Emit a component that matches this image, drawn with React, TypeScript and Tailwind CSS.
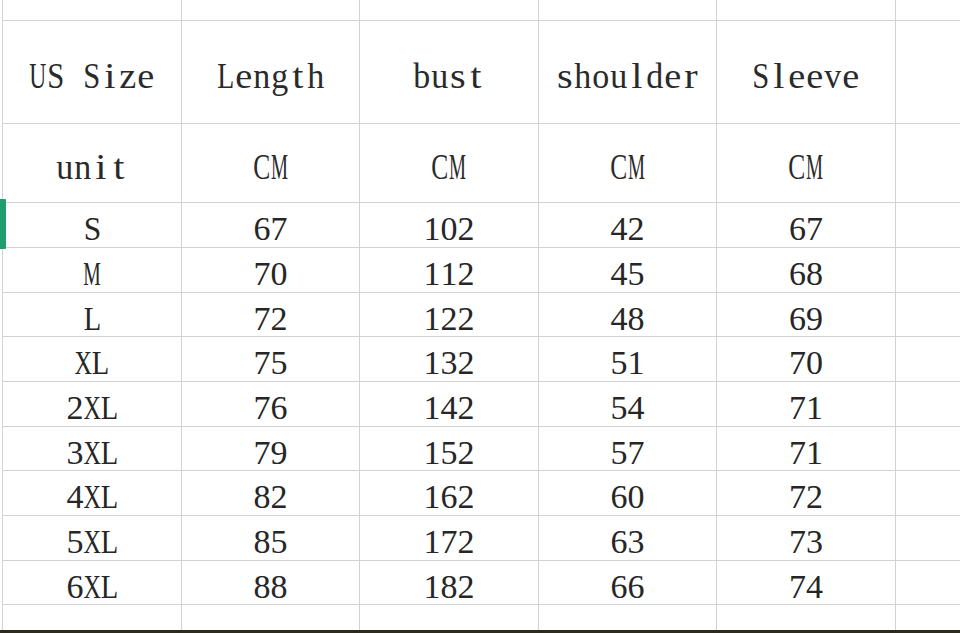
import React from 'react';

const cols = ['w-[179px]', 'w-[178px]', 'w-[179px]', 'w-[178px]', 'w-[179px]'];

const sizes = [
  { size: 'S', vals: ['67', '102', '42', '67'], h: 'h-[45px]' },
  { size: 'M', vals: ['70', '112', '45', '68'], h: 'h-[45px]' },
  { size: 'L', vals: ['72', '122', '48', '69'], h: 'h-[44px]' },
  { size: 'XL', vals: ['75', '132', '51', '70'], h: 'h-[45px]' },
  { size: '2XL', vals: ['76', '142', '54', '71'], h: 'h-[45px]' },
  { size: '3XL', vals: ['79', '152', '57', '71'], h: 'h-[44px]' },
  { size: '4XL', vals: ['82', '162', '60', '72'], h: 'h-[45px]' },
  { size: '5XL', vals: ['85', '172', '63', '73'], h: 'h-[45px]' },
  { size: '6XL', vals: ['88', '182', '66', '74'], h: 'h-[44px]' },
];

// advance widths of Liberation Serif (em), used to fit glyphs to a fixed pitch
const adv: Record<string, number> = {
  U: 0.722, S: 0.556, L: 0.611, C: 0.667, M: 0.889, X: 0.722,
  i: 0.278, z: 0.444, e: 0.444, n: 0.5, g: 0.5, t: 0.278, h: 0.5, b: 0.5,
  u: 0.5, s: 0.389, o: 0.5, l: 0.278, d: 0.5, r: 0.333, v: 0.5,
};

// serif glyphs on a fixed pitch, like the latin of a CJK system font
const Pitch = ({ text, px, pitch, maxW, grow, cls }: { text: string; px: number; pitch: string; maxW: number; grow: number; cls: string }) => (
  <span className={`inline-flex ${cls}`}>
    {text.split('').map((ch, i) => {
      const w = (adv[ch] ?? 0.5) * px;
      const s = Math.min(grow, maxW / w);
      return (
        <span key={i} className={`inline-flex justify-center ${pitch}`}>
          <span className="inline-block" style={{ transform: `scaleX(${s.toFixed(3)})` }}>
            {ch === ' ' ? '\u00a0' : ch}
          </span>
        </span>
      );
    })}
  </span>
);

type RowProps = { cells: string[]; h: string; kind: 'head' | 'data' | 'empty' };

const Row = ({ cells, h, kind }: RowProps) => (
  <div className={`flex ${h} border-b border-[#d2d2d2]`}>
    {cols.map((w, i) => (
      <div
        key={i}
        className={`${w} shrink-0 border-l border-[#d2d2d2] flex items-center justify-center ${kind === 'head' ? 'pt-[8px]' : 'pt-[8px]'}`}
      >
        {kind === 'head' && cells[i] && (
          <Pitch text={cells[i]} px={35} pitch="w-[18px]" maxW={17} grow={1.15} cls="font-['Liberation_Serif',serif] text-[35px] leading-none text-[#2a2a2a]" />
        )}
        {kind === 'data' && cells[i] && (
          <Pitch text={cells[i]} px={34} pitch="w-[17px]" maxW={17.5} grow={1} cls="font-['Liberation_Serif',serif] text-[34px] leading-none text-[#262626]" />
        )}
      </div>
    ))}
    <div className="flex-1 border-l border-[#d2d2d2]" />
  </div>
);

export default function App() {
  return (
    <div className="w-[960px] h-[633px] bg-white relative overflow-hidden flex flex-col pl-[2px]">
      <Row cells={[]} h="h-[21px]" kind="empty" />
      <Row cells={['US Size', 'Length', 'bust', 'shoulder', 'Sleeve']} h="h-[103px]" kind="head" />
      <Row cells={['unit', 'CM', 'CM', 'CM', 'CM']} h="h-[79px]" kind="head" />
      {sizes.map((r) => (
        <Row key={r.size} cells={[r.size, ...r.vals]} h={r.h} kind="data" />
      ))}
      <div className="flex-1 flex">
        {cols.map((w, i) => (
          <div key={i} className={`${w} shrink-0 border-l border-[#d2d2d2]`} />
        ))}
        <div className="flex-1 border-l border-[#d2d2d2]" />
      </div>
      <div className="h-[3px] bg-[#2b2a1c] -ml-[2px]" />
      <div className="absolute left-0 top-[199px] w-[6px] h-[50px] bg-[#1f9d6c] rounded-r-[1px]" />
    </div>
  );
}
